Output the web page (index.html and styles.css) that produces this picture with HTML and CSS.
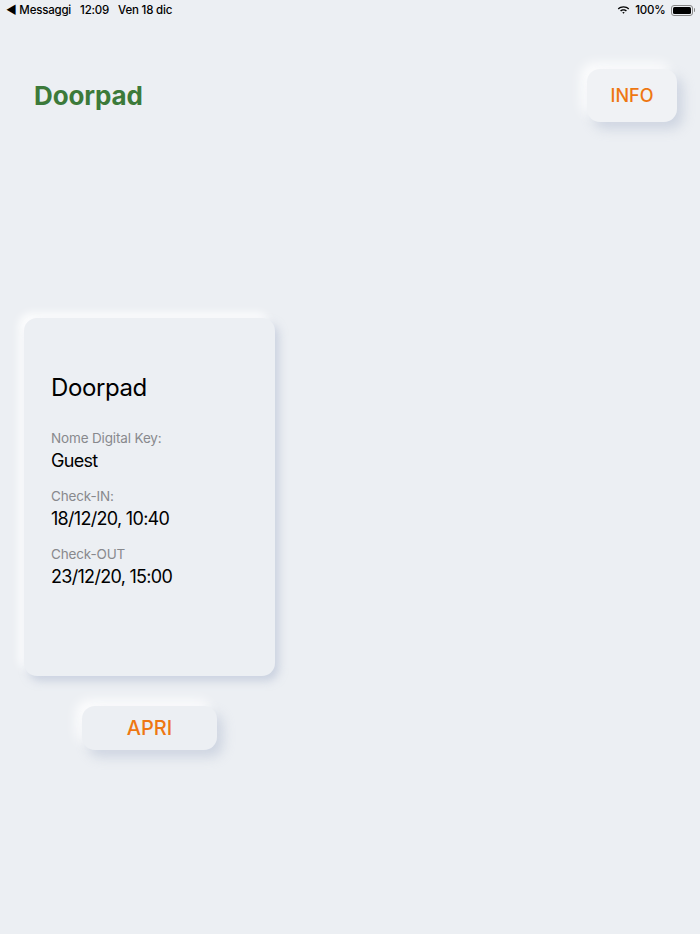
FILE: index.html
```html
<html>

<head>
    <meta charset="utf-8" />
    <title>Doorpad</title>
    <link rel="stylesheet" href="styles.css">
</head>

<body>
    <div class="status-bar">
        <div class="status-left">
            <span class="back">&#9664; Messaggi</span>
            <span>12:09</span>
            <span>Ven 18 dic</span>
        </div>
        <div class="status-right">
            <svg class="wifi" width="13" height="10" viewBox="0 0 13 10">
                <path d="M6.5 1.2C8.7 1.2 10.7 2 12.2 3.4L11.2 4.4C9.9 3.3 8.3 2.6 6.5 2.6C4.7 2.6 3.1 3.3 1.8 4.4L0.8 3.4C2.3 2 4.3 1.2 6.5 1.2Z" fill="#000" />
                <path d="M6.5 4.2C7.8 4.2 9 4.7 9.9 5.5L8.9 6.5C8.3 6 7.4 5.6 6.5 5.6C5.6 5.6 4.7 6 4.1 6.5L3.1 5.5C4 4.7 5.2 4.2 6.5 4.2Z" fill="#000" />
                <path d="M6.5 7.1C7 7.1 7.4 7.3 7.7 7.6L6.5 8.8L5.3 7.6C5.6 7.3 6 7.1 6.5 7.1Z" fill="#000" />
            </svg>
            <span>100%</span>
            <div class="battery">
                <div class="battery-fill"></div>
            </div>
            <div class="battery-tip"></div>
        </div>
    </div>

    <div class="header">
        <h1 class="brand">Doorpad</h1>
        <div class="btn btn-info">INFO</div>
    </div>

    <div class="main">
        <div class="key-card">
            <div class="card-title">Doorpad</div>
            <div class="field">
                <div class="label">Nome Digital Key:</div>
                <div class="value">Guest</div>
            </div>
            <div class="field">
                <div class="label">Check-IN:</div>
                <div class="value">18/12/20, 10:40</div>
            </div>
            <div class="field">
                <div class="label">Check-OUT</div>
                <div class="value">23/12/20, 15:00</div>
            </div>
        </div>
        <div class="btn btn-open">APRI</div>
    </div>
</body>

</html>
```

FILE: styles.css
```css
* {
    margin: 0;
    padding: 0;
    box-sizing: border-box;
}

body {
    background-color: #eceff3;
    font-family: Inter, "Liberation Sans", sans-serif;
    color: #000;
    width: 700px;
    height: 934px;
}

.status-bar {
    height: 20px;
    display: flex;
    justify-content: space-between;
    align-items: center;
    padding: 0 5px 0 6px;
    font-size: 11.5px;
    font-weight: 500;
    letter-spacing: -0.2px;
}

.status-left {
    display: flex;
    gap: 9px;
}

.status-right {
    display: flex;
    align-items: center;
    gap: 4px;
}

.wifi {
    margin-right: 1px;
}

.battery {
    width: 22px;
    height: 11px;
    border: 1px solid #888;
    border-radius: 3px;
    padding: 1px;
    margin-left: 1px;
}

.battery-fill {
    width: 100%;
    height: 100%;
    background: #000;
    border-radius: 1.5px;
}

.battery-tip {
    width: 1.5px;
    height: 4px;
    background: #888;
    margin-left: -3px;
    border-radius: 0 1px 1px 0;
}

.header {
    display: flex;
    justify-content: space-between;
    align-items: center;
    padding: 49px 23px 0 34px;
}

.brand {
    font-size: 26px;
    font-weight: 700;
    color: #3c7a3a;
    line-height: 32px;
    letter-spacing: -0.1px;
}

.btn {
    background: #f0f2f5;
    border-radius: 13px;
    color: #ee7712;
    font-weight: 500;
    display: flex;
    align-items: center;
    justify-content: center;
    box-shadow: 6px 7px 12px rgba(170, 182, 205, 0.45), -6px -6px 12px rgba(255, 255, 255, 0.9);
}

.btn-info {
    width: 90px;
    height: 53px;
    font-size: 18px;
}

.main {
    width: 251px;
    margin: 196px 0 0 24px;
    display: flex;
    flex-direction: column;
    align-items: center;
}

.key-card {
    width: 251px;
    height: 358px;
    border-radius: 13px;
    background: #eceff3;
    padding: 55px 27px 0;
    box-shadow: 4px 5px 8px rgba(170, 182, 205, 0.5), -5px -5px 9px rgba(255, 255, 255, 0.95);
    align-self: stretch;
}

.card-title {
    font-size: 24px;
    line-height: 30px;
    letter-spacing: -0.4px;
    margin-bottom: 26px;
}

.field {
    margin-bottom: 14px;
}

.label {
    font-size: 13.5px;
    line-height: 18px;
    letter-spacing: -0.15px;
    color: #88898d;
    margin-bottom: 2px;
}

.value {
    font-size: 18px;
    line-height: 24px;
    letter-spacing: -0.7px;
}

.btn-open {
    margin-top: 30px;
    width: 135px;
    height: 44px;
    font-size: 20px;
    background: #eceff3;
}
```
